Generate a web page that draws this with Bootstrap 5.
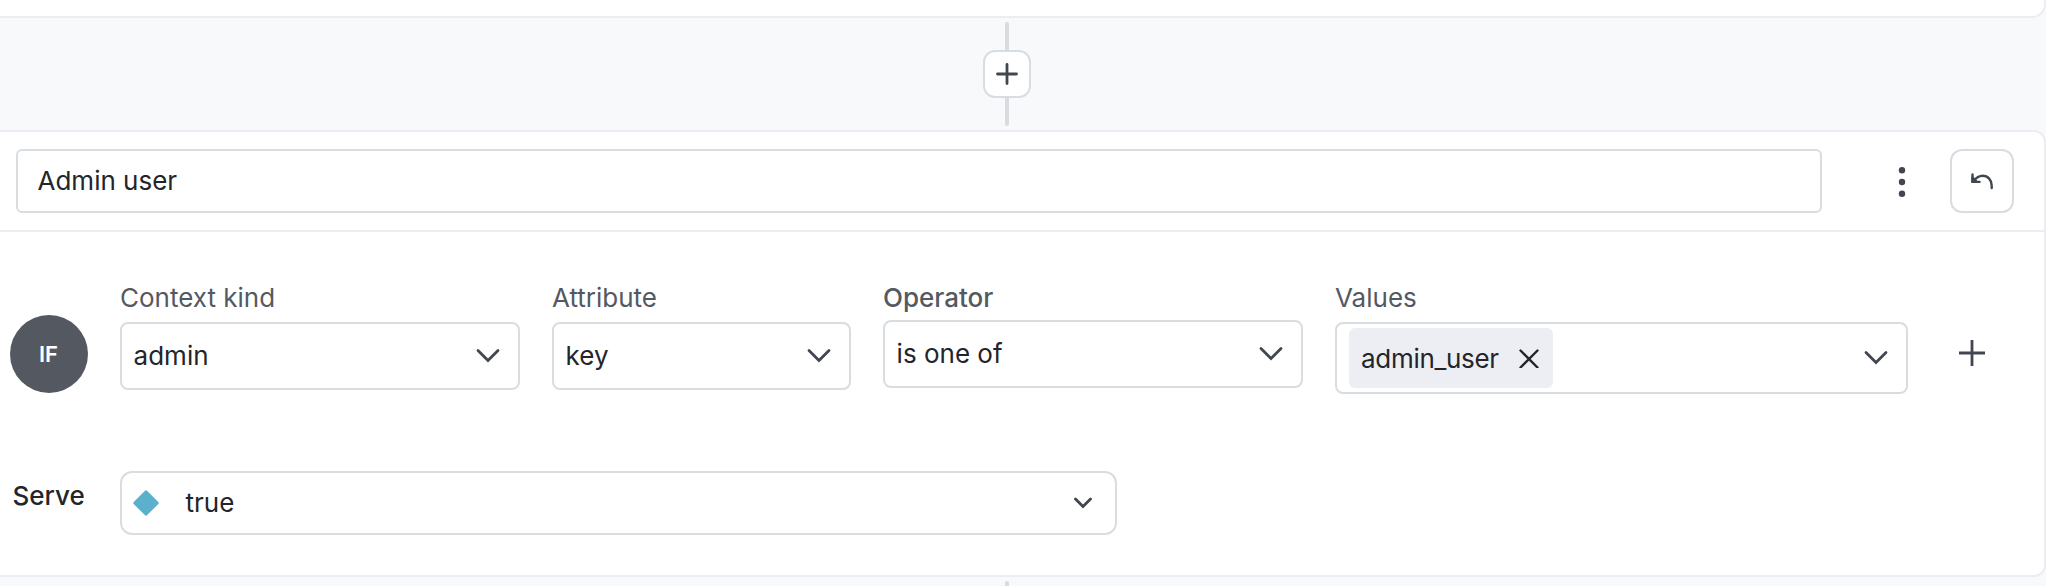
<!DOCTYPE html>
<html lang="en">
<head>
<meta charset="utf-8">
<title>Targeting rule</title>
<link href="https://cdn.jsdelivr.net/npm/bootstrap@5.3.0/dist/css/bootstrap.min.css" rel="stylesheet">
<style>
body{background:#f7f9fb;font-family:Inter,sans-serif;font-size:26px;line-height:32px;color:#23252a;height:586px;overflow:hidden}
svg{display:block;flex:none;fill:none;stroke:#414650;stroke-width:2.8;stroke-linecap:round}
.panel{background:#fff;border:2px solid #ebedf2;border-left:0}
.panel-prev{height:18px;border-top:0;border-radius:0 0 14px 0}
.panel-rule{height:447px;border-radius:0 12px 12px 0}
.joint{padding:4px 0;height:112px;margin-left:-32px}
.joint-next{height:9px;padding-bottom:0;overflow:hidden}
.joint-next .stem{height:5px}
.stem{width:4px;height:28px;background:#d8dbe1}
.stem-top{border-radius:2px 2px 0 0}
.stem-bottom{border-radius:0 0 2px 2px}
.box{background:#fff;border:2px solid #d8dde2;border-radius:8px}
.add{width:48px;height:48px;border-radius:12px}
.rule-head{height:100px;border-bottom:2px solid #ebedf2;padding:0 30px 0 16px}
.rule-name,.rule-name:focus{width:1806px;height:64px;border-radius:6px;padding:0 19.5px 1px;font-size:26px;color:#23252a;box-shadow:none}
.dots{margin-left:76px;margin-top:2px;fill:#414650;stroke:none}
.undo{width:64px;height:64px;border-radius:12px}
.clause{padding:50px 59px 0 10px;height:239px}
.if{width:78px;height:78px;border-radius:50%;background:#545961;color:#fff;font-size:22px;font-weight:600;padding-right:1px;margin:33px 32px 0 0}
.tag-label{color:#545961;height:40px}
.tag-label-strong{height:38px;font-weight:500}
.pick{height:68px;padding:0 17px 0 11.6px}
.pick-values{height:72px;padding:0 17px 0 12px}
.chip{background:#edeef3;border-radius:6px;height:60px;width:204px;padding:0 14px 0 12px}
.chip span{letter-spacing:-.3px;padding-top:1px}
.serve{padding-left:12.500px}
.serve-label{width:107.500px;padding-top:9px;font-weight:500}
.serve-pick{width:997px;height:64px;border-radius:12px;padding:0 23px 0 11px}
.clause-add{margin-top:58px;stroke-linecap:butt}
</style>
</head>
<body>
<div class="panel panel-prev"></div>
<div class="joint d-flex flex-column align-items-center">
  <div class="stem stem-top"></div>
  <button class="box add d-flex align-items-center justify-content-center p-0" aria-label="Add rule"><svg width="22" height="22" viewBox="0 0 22 22"><path d="M11 1.500v19M1.500 11h19"/></svg></button>
  <div class="stem stem-bottom"></div>
</div>
<main class="panel panel-rule">
  <div class="rule-head d-flex align-items-center">
    <input class="form-control box rule-name" value="Admin user" aria-label="Rule name">
    <svg class="dots" width="8" height="32" viewBox="0 0 8 32"><circle cx="4" cy="4.300" r="3.200"/><circle cx="4" cy="16" r="3.200"/><circle cx="4" cy="27.700" r="3.200"/></svg>
    <button class="box undo ms-auto d-flex align-items-center justify-content-center p-0" aria-label="Undo"><svg width="24" height="20" viewBox="0 0 24 20" stroke-linejoin="round" style="stroke-width:2.4"><path d="M2.500 3.500v7.400h7M2.800 10.500C6 7 9 4.800 12.500 4.800C18 4.800 21.700 9 21.700 14.500V17"/><path d="M2.500 6.500v4.400h4z" fill="#414650"/></svg></button>
  </div>
  <div class="clause d-flex align-items-start">
    <div class="if d-flex align-items-center justify-content-center flex-shrink-0">IF</div>
    <div class="d-flex" style="gap:32px">
      <div style="width:400px"><div class="tag-label">Context kind</div>
        <div class="box pick d-flex align-items-center justify-content-between">admin<svg width="26" height="16" viewBox="0 0 26 16"><path d="M3 2.500l10 10 10-10"/></svg></div></div>
      <div style="width:299px"><div class="tag-label">Attribute</div>
        <div class="box pick d-flex align-items-center justify-content-between">key<svg width="26" height="16" viewBox="0 0 26 16"><path d="M3 2.500l10 10 10-10"/></svg></div></div>
      <div style="width:420px"><div class="tag-label tag-label-strong">Operator</div>
        <div class="box pick d-flex align-items-center justify-content-between">is one of<svg width="26" height="16" viewBox="0 0 26 16"><path d="M3 2.500l10 10 10-10"/></svg></div></div>
      <div style="width:573px"><div class="tag-label">Values</div>
        <div class="box pick pick-values d-flex align-items-center justify-content-between">
          <div class="chip d-flex align-items-center justify-content-between"><span>admin_user</span><svg width="20" height="20" viewBox="0 0 20 20" style="stroke:#23252a;stroke-width:2.4"><path d="M1.500 2.500l17 17M18.500 2.500l-17 17"/></svg></div>
          <svg width="26" height="16" viewBox="0 0 26 16"><path d="M3 2.500l10 10 10-10"/></svg></div></div>
    </div>
    <svg class="clause-add ms-auto" width="26" height="26" viewBox="0 0 26 26"><path d="M13 0v26M0 13h26"/></svg>
  </div>
  <div class="serve d-flex">
    <div class="serve-label">Serve</div>
    <div class="box serve-pick d-flex align-items-center">
      <svg width="26" height="26" viewBox="0 0 26 26" style="fill:#5bb1cb;stroke:#5bb1cb;stroke-linejoin:round"><path d="M13 1.700L24.300 13 13 24.300 1.700 13z"/></svg>
      <span style="margin-left:26.500px">true</span>
      <svg class="ms-auto" width="18" height="12" viewBox="0 0 18 12"><path d="M1.500 2l7.500 7.500 7.500-7.500"/></svg>
    </div>
  </div>
</main>
<div class="joint joint-next d-flex flex-column align-items-center"><div class="stem stem-top"></div></div>
<script src="https://cdn.jsdelivr.net/npm/bootstrap@5.3.0/dist/js/bootstrap.bundle.min.js"></script>
</body>
</html>
